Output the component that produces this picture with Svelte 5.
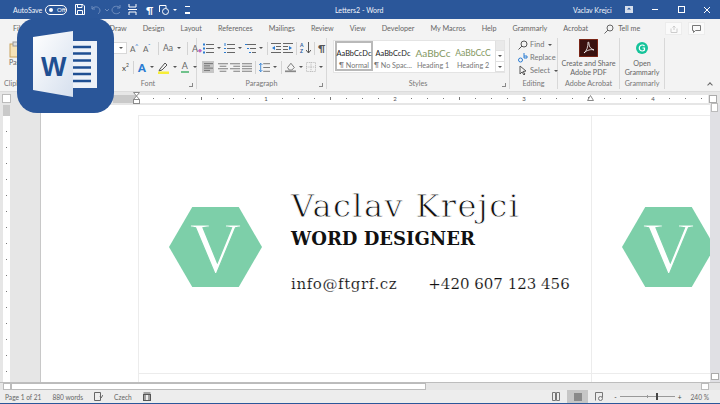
<script>
	const tabs = ['File', 'Home', 'Insert', 'Draw', 'Design', 'Layout', 'References', 'Mailings', 'Review', 'View', 'Developer', 'My Macros', 'Help', 'Grammarly', 'Acrobat'];
	const styles = [
		{ sample: 'AaBbCcDc', label: '¶ Normal', cls: 'sel' },
		{ sample: 'AaBbCcDc', label: '¶ No Spac...', cls: '' },
		{ sample: 'AaBbCc', label: 'Heading 1', cls: 'h1' },
		{ sample: 'AaBbCcC', label: 'Heading 2', cls: 'h2' }
	];
	const ticks = Array.from({ length: 36 }, (_, i) => i);
</script>

<div class="word">
	<header class="titlebar">
		<span class="autosave">AutoSave</span>
		<span class="toggle"><i></i>Off</span>
		<svg class="qa" width="10" height="11" viewBox="0 0 10 11" fill="none" stroke="#fff"><path d="M.5.500h7.500l1.500 1.500v8.500h-9z M2.500.500v3h4.500v-3 M2.500 10.500v-4h5v4" /></svg>
		<svg class="qa undo" width="19" height="12" viewBox="0 0 19 12" fill="none" stroke="#6d8cbd"><path d="M1 2v3h3 M1 5c2-3 7-3 8 1 0 2-1 3-2 4 M14 5l2 2 2-2" /></svg>
		<svg class="qa redo" width="10" height="12" viewBox="0 0 10 12" fill="none" stroke="#6d8cbd"><path d="M9 1v3h-3 M9 4c-2-3-8-2-8 2 0 4 6 5 8 2" /></svg>
		<svg class="qa" width="9" height="11" viewBox="0 0 9 11" fill="none" stroke="#fff"><path d="M1 0v3h7v-3 M0 5.500h9 M1 11v-3h7v3" /></svg>
		<span class="pilcrow">¶</span>
		<svg class="qa" width="12" height="12" viewBox="0 0 12 12" fill="none" stroke="#fff"><path d="M1.500 8v-6.500h6.500v3" /><circle cx="7.500" cy="7.500" r="3" /></svg>
		<span class="caret white"></span>
		<span class="customize"></span>
		<span class="doc-title">Letters2 - Word</span>
		<span class="user">Vaclav Krejci</span>
		<svg class="win" width="8" height="7" viewBox="0 0 8 7"><rect width="8" height="7" fill="#d5deec" /><path d="M4 1.500l2 2h-4z" fill="#2b579a" /></svg>
		<span class="win-min"></span>
		<span class="win-max"></span>
		<svg class="win-x" width="8" height="8" viewBox="0 0 8 8" stroke="#fff"><path d="M1 1l6 6M7 1l-6 6" /></svg>
	</header>

	<nav class="tabs">
		{#each tabs as name}
			<span>{name}</span>
		{/each}
		<svg class="search" width="10" height="10" viewBox="0 0 10 10" fill="none" stroke="#666"><circle cx="6" cy="4" r="3" /><path d="M4 6l-3.500 3.500" /></svg>
		<span class="tell">Tell me</span>
		<span class="tab-btn"><svg width="8" height="8" viewBox="0 0 8 8" fill="none" stroke="#ccc"><path d="M1 3.500v4h6v-4M4 5v-4M2.500 2.500l1.500-1.500 1.500 1.500" /></svg></span>
		<span class="tab-btn"><svg width="9" height="8" viewBox="0 0 9 8" fill="none" stroke="#777"><path d="M.5.500h8v5h-5l-2 2v-2h-1z" /></svg></span>
	</nav>

	<section class="ribbon">
		<div class="group clip">
			<div class="paste">
				<svg width="14" height="17" viewBox="0 0 14 17"><rect x="1" y="3" width="11" height="13" fill="#f6e3b8" stroke="#c9a45f" /><rect x="4" y="1" width="5" height="4" fill="#ddd" stroke="#999" /></svg>
				<span>Paste</span>
			</div>
			<span class="glabel">Clipboard</span>
		</div>

		<div class="group font">
			<div class="grow">
				<div class="row">
					<span class="sizebox"><span class="caret"></span></span>
					<span class="tool ic">A<sup>^</sup></span>
					<span class="tool ic">A<sup>ˇ</sup></span>
					<span class="sep"></span>
					<span class="tool aa">Aa</span><span class="caret"></span>
					<span class="sep"></span>
					<span class="tool clearfmt">A<b>◆</b></span>
				</div>
				<div class="row low">
					<span class="tool xsq">x<sup>2</sup></span>
					<span class="sep"></span>
					<span class="tool afx">A</span><span class="caret"></span>
					<span class="tool hl">
						<svg width="11" height="12" viewBox="0 0 11 12"><path d="M2 7l5-6 2 2-5 5-3 1z" fill="none" stroke="#555" /><rect x="0" y="9.500" width="11" height="2.500" fill="#f7ee38" /></svg>
					</span><span class="caret"></span>
					<span class="tool fc">A</span><span class="caret"></span>
				</div>
			</div>
			<span class="glabel">Font<i class="launch"></i></span>
		</div>

		<div class="group para">
			<div class="grow">
				<div class="row">
					<svg class="tool" width="11" height="11" viewBox="0 0 11 11" fill="none" stroke="#666"><path d="M3 1.500h8M3 5.500h8M3 9.500h8" /><path d="M0 1.500h2M0 5.500h2M0 9.500h2" stroke="#2b7cd3" stroke-width="2" /></svg><span class="caret"></span>
					<svg class="tool" width="11" height="11" viewBox="0 0 11 11" fill="none" stroke="#666"><path d="M3 1.500h8M3 5.500h8M3 9.500h8" /><path d="M1 0v3M0 5.500h2M0 9.500h2" stroke="#2b7cd3" /></svg><span class="caret"></span>
					<svg class="tool" width="11" height="11" viewBox="0 0 11 11" fill="none" stroke="#666"><path d="M2 1.500h9M5 5.500h6M7 9.500h4" /><path d="M0 1.500h2M2 5.500h2M4 9.500h2" stroke="#2b7cd3" /></svg><span class="caret"></span>
					<span class="sep"></span>
					<svg class="tool" width="10" height="10" viewBox="0 0 10 10" fill="none" stroke="#666"><path d="M0 .5h10M5 3.500h5M5 6.500h5M0 9.500h10" /><path d="M4 3l-3 2 3 2z" fill="#2b7cd3" stroke="none" /></svg>
					<svg class="tool" width="10" height="10" viewBox="0 0 10 10" fill="none" stroke="#666"><path d="M0 .5h10M0 3.500h5M0 6.500h5M0 9.500h10" /><path d="M6 3l3 2-3 2z" fill="#2b7cd3" stroke="none" /></svg>
					<span class="sep"></span>
					<span class="tool sort"><b>A</b><b>Z</b><svg width="5" height="12" viewBox="0 0 5 12" fill="none" stroke="#555"><path d="M2.500 0v11M0 8l2.500 3 2.500-3" /></svg></span>
					<span class="sep"></span>
					<span class="tool para-mark">¶</span>
				</div>
				<div class="row low">
					<span class="aligned"><svg width="9" height="10" viewBox="0 0 12 10" stroke="#555"><path d="M0 .5h12M0 3.500h8M0 6.500h12M0 9.500h8" /></svg></span>
					<svg class="tool" width="10" height="9" viewBox="0 0 12 10" stroke="#666"><path d="M0 .5h12M2 3.500h8M0 6.500h12M2 9.500h8" /></svg>
					<svg class="tool" width="10" height="9" viewBox="0 0 12 10" stroke="#666"><path d="M0 .5h12M4 3.500h8M0 6.500h12M4 9.500h8" /></svg>
					<svg class="tool" width="10" height="9" viewBox="0 0 12 10" stroke="#666"><path d="M0 .5h12M0 3.500h12M0 6.500h12M0 9.500h12" /></svg>
					<span class="sep"></span>
					<svg class="tool" width="11" height="11" viewBox="0 0 13 12" fill="none" stroke="#666"><path d="M5 1.500h8M5 6h8M5 10.500h8" /><path d="M2 1v10M0 3l2-2 2 2M0 9l2 2 2-2" stroke="#2b7cd3" /></svg><span class="caret"></span>
					<span class="sep"></span>
					<svg class="tool" width="11" height="11" viewBox="0 0 13 12" fill="none" stroke="#666"><path d="M3 6l4-5 4 5-3 3h-3z" /><path d="M0 10.500h13" stroke="#888" stroke-width="2" /></svg><span class="caret"></span>
					<svg class="tool" width="10" height="10" viewBox="0 0 11 11" fill="none" stroke="#bbb" stroke-dasharray="1.500 1"><rect x=".5" y=".5" width="10" height="10" /><path d="M0 5.500h11M5.500 0v11" /></svg><span class="caret"></span>
				</div>
			</div>
			<span class="glabel">Paragraph<i class="launch"></i></span>
		</div>

		<div class="group styles">
			<div class="gallery-wrap">
				<div class="gallery">
					{#each styles as s}
						<div class="style {s.cls}">
							<span class="sample">{s.sample}</span>
							<span class="slabel">{s.label}</span>
						</div>
					{/each}
				</div>
				<div class="spin">
					<span class="up"></span>
					<span class="down"></span>
					<span class="more"></span>
				</div>
			</div>
			<span class="glabel">Styles<i class="launch"></i></span>
		</div>

		<div class="group editing">
			<div class="grow edit-list">
				<span><svg width="10" height="10" viewBox="0 0 10 10" fill="none" stroke="#555"><circle cx="6" cy="4" r="3" /><path d="M4 6l-3.500 3.500" /></svg>Find<span class="caret"></span></span>
				<span><svg width="10" height="10" viewBox="0 0 10 10" fill="none" stroke="#2b7cd3"><circle cx="2.500" cy="7" r="2" /><path d="M6 0v5M6 3h3v2H6" /></svg>Replace</span>
				<span><svg width="10" height="11" viewBox="0 0 10 11" fill="none" stroke="#555"><path d="M2 1v8l2-2 2 3 1-1-2-2.500 3-.5z" /></svg>Select<span class="caret"></span></span>
			</div>
			<span class="glabel">Editing</span>
		</div>

		<div class="group acrobat">
			<div class="grow big">
				<svg width="19" height="18" viewBox="0 0 19 18"><rect width="19" height="18" fill="#3a1210" stroke="#b3381f" /><path d="M5 14c3-2 4-7 4-10 0-2 1-1 1 1 0 3 2 5 5 6-3-1-7 0-10 3z" fill="none" stroke="#fff" stroke-width=".8" /></svg>
				<span>Create and Share<br />Adobe PDF</span>
			</div>
			<span class="glabel">Adobe Acrobat</span>
		</div>

		<div class="group gram">
			<div class="grow big">
				<svg width="14" height="18" viewBox="0 0 14 18"><circle cx="7" cy="9" r="6" fill="#15c39a" /><path d="M9.500 7a3 3 0 1 0 0 4V9H7.500" fill="none" stroke="#fff" stroke-width="1.200" /></svg>
				<span>Open<br />Grammarly</span>
			</div>
			<span class="glabel">Grammarly</span>
		</div>

		<span class="collapse"></span>
	</section>

	<div class="ruler-row">
		<span class="tab-stop"></span>
		<div class="ruler">
			<div class="ruler-margin"></div>
			<div class="ruler-track">
				{#each ticks as t}
					<span class="tick">
						{#if t > 0 && t % 8 === 0}
							{t / 8}
						{:else if t > 0}
							<i class:long={t % 4 === 0}></i>
						{/if}
					</span>
				{/each}
			</div>
		</div>
		<span class="scroll-up"></span>
		<svg class="indent-left" width="8" height="12" viewBox="0 0 8 12" fill="#fff" stroke="#8a8a8a"><path d="M.5.500h6l-3 3.500z M.5 7.500l3-3.500 3 3.500z" /><rect x=".5" y="7.500" width="6" height="4" /></svg>
		<svg class="indent-right" width="7" height="6" viewBox="0 0 7 6" fill="#fff" stroke="#8a8a8a"><path d="M3.500.500l3 5h-6z" /></svg>
	</div>

	<main class="body">
		<div class="vruler">
			<div class="vtrack">
				<span class="vmargin"></span>
				<span class="vdots">
					{#each ticks as t}<i></i>{/each}
				</span>
			</div>
		</div>
		<div class="canvas">
			<div class="sheet">
				<div class="page">
					<div class="hex">V</div>
					<div class="card-text">
						<h1>Vaclav Krejci</h1>
						<h2>WORD DESIGNER</h2>
						<p><span class="mail">info@ftgrf.cz</span><span>+420 607 123 456</span></p>
					</div>
				</div>
				<div class="page next">
					<div class="hex">V</div>
				</div>
				<div class="below"></div>
				<div class="below next"></div>
			</div>
		</div>
		<div class="vscroll">
			<span class="thumb"></span>
			<span class="scroll-down"></span>
		</div>
	</main>

	<div class="hscroll">
		<span class="h-left"></span>
		<span class="h-thumb"></span>
		<span class="h-right"></span>
	</div>

	<footer class="status">
		<span>Page 1 of 21</span>
		<span>880 words</span>
		<svg width="9" height="9" viewBox="0 0 9 9" fill="none" stroke="#666"><path d="M.5.500h6v8h-6zM6 4l1 2 2-3" /></svg>
		<span>Czech</span>
		<svg width="8" height="9" viewBox="0 0 8 9" fill="none" stroke="#555"><rect x=".5" y="2.500" width="7" height="6" /><path d="M.5 1h7M2 3v5M6 3v5" /></svg>
		<span class="spacer"></span>
		<svg class="view" width="8" height="9" viewBox="0 0 8 9" fill="none" stroke="#777"><path d="M.5.500h3v8h-3zM4.500.500h3v8h-3z" /></svg>
		<span class="view-on"><i></i></span>
		<svg class="view" width="8" height="9" viewBox="0 0 8 9" fill="none" stroke="#777"><path d="M.5 8.500v-8h7v5" /><circle cx="5.500" cy="6.500" r="2" /></svg>
		<span class="zoom-ctl">
			<span>-</span>
			<span class="zoom"><i class="mid"></i><i class="knob"></i></span>
			<span>+</span>
		</span>
		<span class="pct">240 %</span>
	</footer>

	<div class="logo">
		<svg viewBox="0 0 97 95" width="97" height="95" role="img" aria-label="Word">
			<defs>
				<linearGradient id="leaf" x1="0" x2="1" y1="0" y2="1">
					<stop offset="0" stop-color="#fff" />
					<stop offset="1" stop-color="#d6e0ee" />
				</linearGradient>
			</defs>
			<rect x="56" y="23" width="24" height="47" fill="#eef2f8" />
			<path d="M56 29h18M56 35.500h18M56 42.500h18M56 49.500h18M56 56h18M56 63h18" stroke="#1f4f92" stroke-width="2.400" />
			<path d="M16 19 56 13v66l-40-7z" fill="url(#leaf)" />
		</svg>
		<span class="logo-w">W</span>
	</div>
</div>

<style>
	:global(body) {
		margin: 0;
	}

	.word {
		position: relative;
		width: 720px;
		height: 404px;
		overflow: hidden;
		display: flex;
		flex-direction: column;
		background: #e6e6e6;
		font-family: Lato, 'Open Sans', sans-serif;
		color: #666;
	}

	.titlebar {
		height: 19px;
		flex: none;
		display: flex;
		align-items: center;
		background: #2b579a;
		color: #f2f5fa;
		font-size: 7px;
		padding-left: 13px;
		white-space: nowrap;
	}

	.autosave {
		width: 32px;
		flex: none;
	}

	.toggle {
		display: flex;
		align-items: center;
		gap: 4px;
		box-sizing: border-box;
		width: 22px;
		height: 10px;
		margin-right: 8px;
		padding-left: 3px;
		border: 1px solid #fff;
		border-radius: 5px;
		font-size: 6px;
		color: #fff;
		flex: none;
	}

	.toggle i {
		width: 4px;
		height: 4px;
		border-radius: 50%;
		background: #fff;
	}

	.qa {
		margin-right: 6px;
		flex: none;
	}

	.undo {
		margin-right: 1px;
	}

	.redo {
		margin-right: 7px;
	}

	.pilcrow {
		width: 6px;
		font-size: 10px;
		font-weight: 700;
		color: #fff;
		margin: 0 6px 0 3px;
	}

	.caret {
		display: inline-block;
		width: 0;
		height: 0;
		margin: 0 3px;
		border: 2px solid transparent;
		border-top: 2.500px solid #555;
		border-bottom-width: 0;
		flex: none;
	}

	.caret.white {
		border-top-color: #fff;
		margin-left: -3px;
	}

	.customize {
		width: 5px;
		height: 5px;
		margin-left: 5px;
		border-top: 1px solid #fff;
		border-bottom: 2px solid #fff;
		flex: none;
	}

	.doc-title {
		margin-left: 145px;
		width: 238px;
		flex: none;
	}

	.user {
		width: 52px;
		flex: none;
	}

	.win-min {
		width: 6px;
		height: 1px;
		margin-left: 19px;
		background: #fff;
	}

	.win-max {
		box-sizing: border-box;
		width: 7px;
		height: 7px;
		margin-left: 20px;
		border: 1px solid #fff;
	}

	.win-x {
		margin-left: 18px;
	}

	.tabs {
		height: 19px;
		flex: none;
		display: flex;
		align-items: center;
		gap: 16px;
		padding-left: 13px;
		background: #f3f3f3;
		font-size: 7.200px;
		white-space: nowrap;
	}

	.search {
		margin-right: -12px;
	}

	.tell {
		width: 31px;
		flex: none;
	}

	.tab-btn {
		box-sizing: border-box;
		display: flex;
		align-items: center;
		justify-content: center;
		width: 17px;
		height: 13px;
		margin-right: -10px;
		background: #fafafa;
		border: 1px solid #ececec;
	}

	.ribbon {
		position: relative;
		height: 54px;
		flex: none;
		display: flex;
		background: #f3f3f3;
		border-bottom: 1px solid #dcdcdc;
		box-sizing: border-box;
	}

	.group {
		box-sizing: border-box;
		display: flex;
		flex-direction: column;
		flex: none;
		height: 51px;
		border-right: 1px solid #d8d8d8;
	}

	.grow {
		flex: 1;
		min-height: 0;
	}

	.glabel {
		position: relative;
		height: 11px;
		flex: none;
		text-align: center;
		font-size: 7.200px;
		line-height: 11px;
		color: #777;
	}

	.launch {
		position: absolute;
		right: 3px;
		bottom: 2px;
		width: 3px;
		height: 3px;
		border-right: 1px solid #888;
		border-bottom: 1px solid #888;
	}

	.clip {
		width: 100px;
	}

	.paste {
		flex: 1;
		display: flex;
		flex-direction: column;
		align-items: flex-start;
		padding: 3px 0 0 9px;
		font-size: 7px;
	}

	.clip .glabel {
		text-align: left;
		padding-left: 4px;
	}

	.font {
		width: 97px;
	}

	.row {
		display: flex;
		align-items: center;
		height: 18px;
		margin-top: 1px;
	}

	.font .row {
		padding-left: 13px;
	}

	.font .row.low {
		padding-left: 21px;
	}

	.sizebox {
		box-sizing: border-box;
		display: flex;
		justify-content: flex-end;
		align-items: center;
		width: 14px;
		height: 12px;
		margin-right: 2px;
		background: #fff;
		border: 1px solid #d8d8d8;
		flex: none;
	}

	.tool {
		flex: none;
		margin: 0 1px;
	}

	.ic {
		width: 11px;
		font-size: 8px;
		letter-spacing: -.5px;
	}

	.ic sup {
		font-size: 6px;
		color: #2b7cd3;
	}

	.sep {
		width: 1px;
		height: 13px;
		margin: 0 3px;
		background: #d3d3d3;
		flex: none;
	}

	.aa {
		font-size: 8.500px;
	}

	.clearfmt {
		font-size: 9px;
	}

	.clearfmt b {
		font-size: 5px;
		color: #c063c0;
	}

	.xsq {
		font-size: 8px;
		color: #444;
	}

	.xsq sup {
		font-size: 5px;
	}

	.afx {
		font-size: 11px;
		font-weight: 800;
		color: #2b7cd3;
	}

	.fc {
		font-size: 9px;
		line-height: 10px;
		padding: 0 1px;
		border-bottom: 2px solid #70c28c;
	}

	.para {
		width: 130px;
	}

	.para .row {
		padding-left: 5px;
	}

	.para .sep {
		margin: 0 2px;
	}

	.para .caret {
		margin: 0 2px;
	}

	.sort {
		display: flex;
		flex-wrap: wrap;
		position: relative;
		width: 11px;
		font-size: 5px;
		color: #2b579a;
	}

	.sort b {
		width: 6px;
		line-height: 6px;
	}

	.sort svg {
		position: absolute;
		right: 0;
		top: 0;
	}

	.para-mark {
		font-size: 10px;
		font-weight: 700;
		color: #555;
	}

	.aligned {
		display: flex;
		align-items: center;
		justify-content: center;
		width: 12px;
		height: 12px;
		margin-right: 3px;
		background: #c6c6c6;
		flex: none;
	}

	.styles {
		width: 183px;
	}

	.gallery-wrap {
		display: flex;
		box-sizing: border-box;
		width: 172px;
		height: 33px;
		margin: 2px 0 5px 6px;
		background: #fff;
		border: 1px solid #e4e4e4;
		flex: none;
	}

	.gallery {
		display: flex;
		flex: 1;
		align-items: flex-start;
		padding-left: 1px;
	}

	.style {
		box-sizing: border-box;
		display: flex;
		flex-direction: column;
		align-items: center;
		width: 40px;
		padding-top: 5px;
		white-space: nowrap;
	}

	.style.sel {
		width: 38px;
		height: 30px;
		padding-top: 3px;
		border: 2px solid #b9b9b9;
		background: #fff;
	}

	.sample {
		height: 15px;
		font-size: 7.400px;
		line-height: 15px;
		color: #222;
	}

	.slabel {
		font-size: 7.200px;
		line-height: 9px;
		color: #777;
	}

	.h1 .sample {
		font-size: 10px;
		color: #84985f;
	}

	.h2 .sample {
		font-size: 8.600px;
		color: #84985f;
	}

	.spin {
		display: flex;
		flex-direction: column;
		width: 8px;
		flex: none;
		border-left: 1px solid #e0e0e0;
	}

	.spin span {
		flex: 1;
		position: relative;
		border-bottom: 1px solid #e0e0e0;
	}

	.spin .up {
		background: #e9e9e9;
	}

	.spin .down::after,
	.spin .more::after {
		content: '';
		position: absolute;
		left: 2px;
		top: 4px;
		border: 2px solid transparent;
		border-top-color: #555;
		border-bottom-width: 0;
	}

	.editing {
		width: 48px;
	}

	.edit-list {
		display: flex;
		flex-direction: column;
		padding-left: 8px;
		font-size: 7.500px;
		color: #777;
	}

	.edit-list > span {
		display: flex;
		align-items: center;
		gap: 1px;
		height: 13px;
	}

	.edit-list svg {
		margin-right: 1px;
		flex: none;
	}

	.acrobat {
		width: 62px;
	}

	.gram {
		width: 45px;
	}

	.big {
		display: flex;
		flex-direction: column;
		align-items: center;
		font-size: 7.200px;
		line-height: 9px;
		text-align: center;
		padding-top: 1px;
		white-space: nowrap;
		color: #666;
	}

	.big svg {
		margin-bottom: 2px;
	}

	.collapse {
		position: absolute;
		right: 8px;
		bottom: 4px;
		width: 3px;
		height: 3px;
		border-left: 1px solid #666;
		border-top: 1px solid #666;
		transform: rotate(45deg);
	}

	.ruler-row {
		position: relative;
		height: 13px;
		flex: none;
		display: flex;
		align-items: center;
		background: #e6e6e6;
	}

	.tab-stop {
		box-sizing: border-box;
		width: 9px;
		height: 9px;
		margin-left: 2px;
		background: #fff;
		border: 1px solid #bbb;
		flex: none;
	}

	.ruler {
		display: flex;
		align-items: center;
		flex: none;
		width: 595px;
		height: 8px;
		margin-left: 102px;
		background: #fff;
	}

	.ruler-margin {
		width: 24px;
		height: 8px;
		background: #c9c9c9;
		flex: none;
	}

	.ruler-track {
		display: flex;
		flex: 1;
		min-width: 0;
		height: 8px;
		overflow: hidden;
		padding-left: 0;
		font-size: 6px;
		line-height: 8px;
		color: #555;
	}

	.tick {
		display: flex;
		align-items: center;
		justify-content: center;
		width: 16.125px;
		height: 8px;
		flex: none;
	}

	.tick:first-child {
		margin-left: -8.060px;
	}

	.tick i {
		width: 1px;
		height: 1px;
		background: #777;
	}

	.tick i.long {
		height: 3px;
	}

	.indent-left {
		position: absolute;
		left: 133px;
		top: 0;
	}

	.indent-right {
		position: absolute;
		left: 587px;
		top: 3px;
	}

	.scroll-up {
		box-sizing: border-box;
		width: 8px;
		height: 8px;
		margin-left: 1px;
		background: #fff;
		border: 1px solid #aaa;
		flex: none;
	}

	.body {
		flex: 1;
		min-height: 0;
		display: flex;
	}

	.vruler {
		box-sizing: border-box;
		width: 41px;
		flex: none;
		background: #e6e6e6;
		border-right: 1px solid #c8c8c8;
		padding-left: 3px;
	}

	.vtrack {
		width: 7px;
		height: 100%;
		overflow: hidden;
		background: #fff;
	}

	.vmargin {
		display: block;
		height: 11px;
		background: #c9c9c9;
	}

	.vdots {
		display: flex;
		flex-direction: column;
		align-items: center;
		gap: 15px;
		padding-top: 15px;
	}

	.vdots i {
		width: 1px;
		height: 1px;
		background: #777;
		flex: none;
	}

	.canvas {
		flex: 1;
		min-width: 0;
		background: #fff;
		padding: 10px 0 0 97px;
		overflow: hidden;
	}

	.sheet {
		display: grid;
		grid-template-columns: 453px 1fr;
		grid-template-rows: 258px 1fr;
		height: 100%;
		box-sizing: border-box;
		border-top: 1px solid #ececec;
		border-left: 1px solid #ececec;
	}

	.page {
		box-sizing: border-box;
		display: flex;
		align-items: flex-start;
		gap: 29px;
		padding: 91px 0 0 30px;
		border-right: 1px solid #ececec;
		border-bottom: 1px solid #ececec;
		overflow: hidden;
	}

	.page.next,
	.below.next {
		border-right: 0;
	}

	.below {
		border-right: 1px solid #ececec;
	}

	.hex {
		flex: none;
		width: 93px;
		height: 80px;
		background: #7dcfa9;
		clip-path: polygon(25% 0, 75% 0, 100% 50%, 75% 100%, 25% 100%, 0 50%);
		text-align: center;
		font-family: 'Liberation Serif', serif;
		font-size: 72px;
		line-height: 82px;
		color: #fff;
		-webkit-text-stroke: 1.200px #7dcfa9;
	}

	.card-text {
		margin-top: -21px;
		white-space: nowrap;
	}

	h1 {
		margin: 0;
		font-family: 'DejaVu Serif', serif;
		font-weight: 400;
		font-size: 32px;
		line-height: 40px;
		letter-spacing: 1.400px;
		color: #111;
		-webkit-text-stroke: .8px #fff;
	}

	h2 {
		margin: 0;
		font-family: 'DejaVu Serif', serif;
		font-weight: 700;
		font-size: 18px;
		line-height: 25px;
		color: #111;
	}

	p {
		display: flex;
		gap: 31px;
		margin: 22px 0 0;
		font-family: 'DejaVu Serif', serif;
		font-size: 15px;
		line-height: 22px;
		color: #111;
		-webkit-text-stroke: .15px #fff;
	}

	.mail {
		letter-spacing: .6px;
	}

	.hscroll {
		box-sizing: border-box;
		height: 8px;
		flex: none;
		display: flex;
		background: #e6e6e6;
		border-top: 1px solid #bdbdbd;
	}

	.h-left,
	.h-right {
		box-sizing: border-box;
		width: 8px;
		flex: none;
		background: #fff;
		border: 1px solid #bbb;
	}

	.h-left {
		margin-left: 3px;
	}

	.h-thumb {
		width: 415px;
		flex: none;
		background: #fff;
		border: 1px solid #bbb;
		box-sizing: border-box;
	}

	.h-right {
		margin-left: auto;
		margin-right: 11px;
	}

	.vscroll {
		box-sizing: border-box;
		position: relative;
		width: 10px;
		flex: none;
		background: #e0e0e4;
		padding: 0 2px 0 1px;
	}

	.thumb {
		display: block;
		box-sizing: border-box;
		height: 9px;
		margin-top: -2px;
		background: #fff;
		border: 1px solid #bbb;
	}

	.scroll-down {
		position: absolute;
		bottom: 2px;
		left: 1px;
		width: 8px;
		height: 7px;
		box-sizing: border-box;
		background: #fff;
		border: 1px solid #aaa;
	}

	.status {
		box-sizing: border-box;
		height: 14px;
		flex: none;
		display: flex;
		align-items: center;
		gap: 11px;
		padding: 0 11px 0 5px;
		background: #ededed;
		border-bottom: 1px solid #2b579a;
		font-size: 6.600px;
		white-space: nowrap;
	}

	.spacer {
		flex: 1;
	}

	.view-on {
		display: flex;
		align-items: center;
		justify-content: center;
		width: 21px;
		height: 13px;
		margin: 0 -4px;
		background: #c6c6c6;
	}

	.view-on i {
		width: 8px;
		height: 8px;
		background: #8a8a8a;
	}

	.zoom-ctl {
		display: flex;
		align-items: center;
		gap: 3px;
		margin: 0 -2px 0 0;
		color: #444;
	}

	.zoom {
		position: relative;
		width: 55px;
		height: 1px;
		background: #999;
	}

	.zoom .mid {
		position: absolute;
		left: 27px;
		top: -1px;
		width: 1px;
		height: 3px;
		background: #999;
	}

	.zoom .knob {
		position: absolute;
		left: 36px;
		top: -3px;
		width: 2px;
		height: 7px;
		background: #444;
	}

	.logo {
		position: absolute;
		left: 17px;
		top: 18px;
		width: 97px;
		height: 95px;
		border-radius: 20px;
		background: #2a5699;
	}

	.logo svg {
		display: block;
	}

	.logo-w {
		position: absolute;
		left: 24px;
		top: 34px;
		font-family: 'Liberation Sans', sans-serif;
		font-weight: 700;
		font-size: 27px;
		line-height: 30px;
		color: #1f4f92;
	}
</style>
